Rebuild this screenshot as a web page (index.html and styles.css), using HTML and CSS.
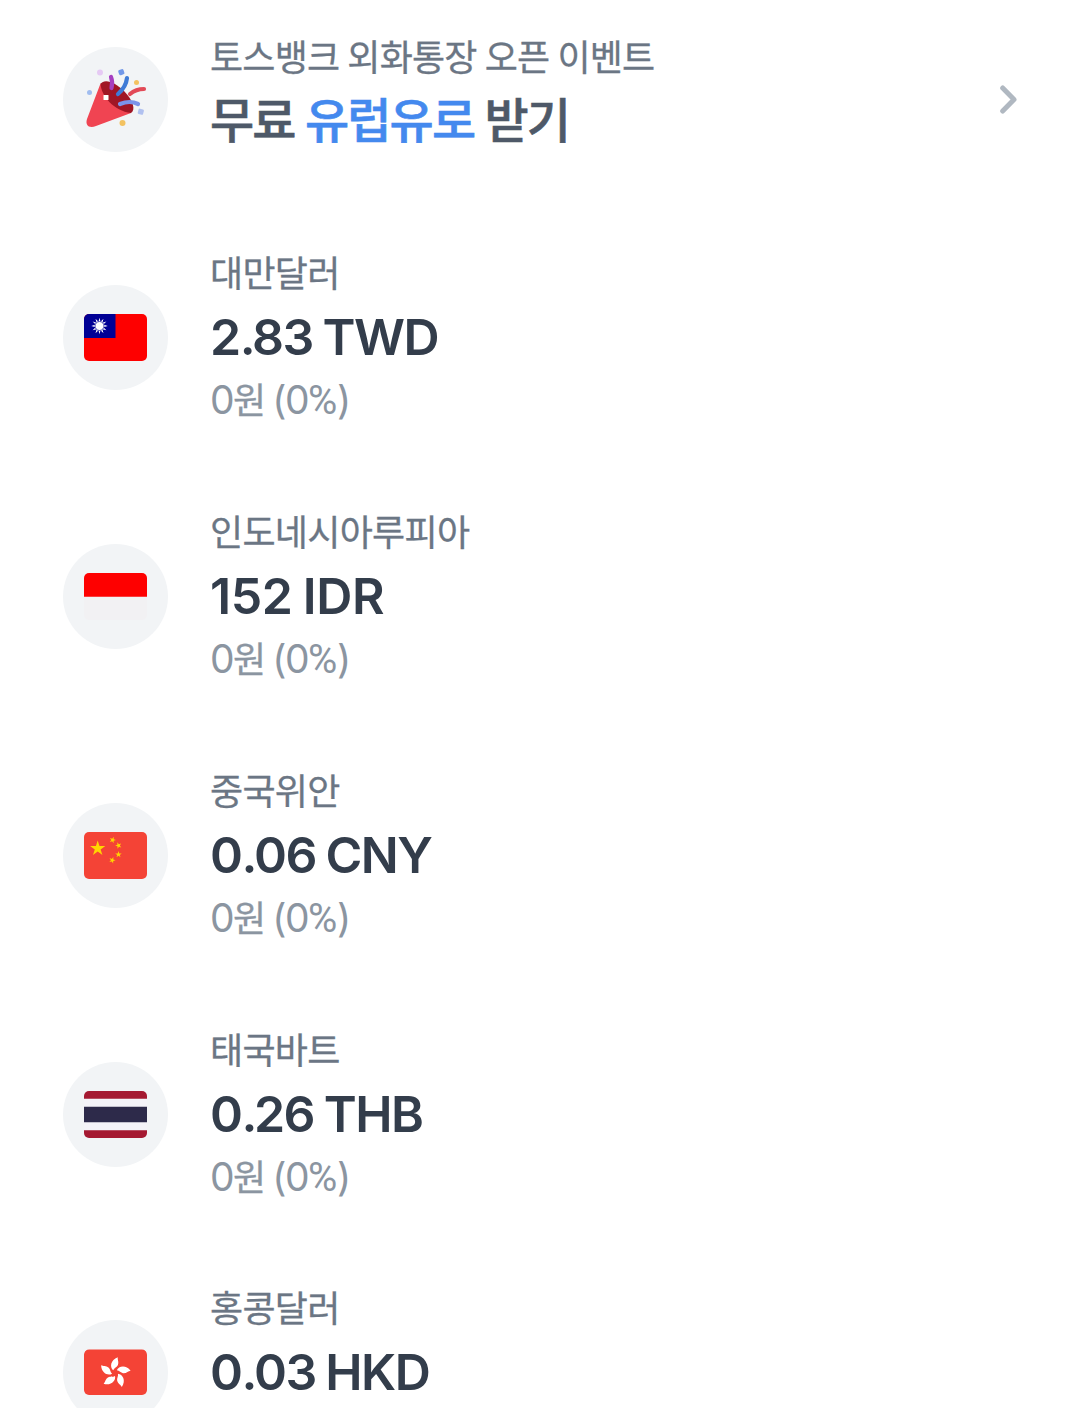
FILE: index.html
```html
<!DOCTYPE html>
<html lang="ko">
<head>
<meta charset="utf-8">
<title>외화통장</title>
<link rel="stylesheet" href="styles.css">
</head>
<body>
<main class="list">
  <a class="row event">
    <span class="badge">
      <svg width="105" height="105" viewBox="0 0 105 105" fill="none" stroke-linecap="round">
        <path d="M37 38C40 31 51 34 61 44C70 53 73 63 68 66L55 66L37 47Z" fill="#a01625"/>
        <path d="M37.500 36.500C38 49 51 64 68 66L33 79C26 82 22 78 24 72Z" fill="#f04452"/>
        <path d="M48 30Q50 35 48.500 41" stroke="#a63fc0" stroke-width="4.200"/>
        <path d="M64 31Q63 40 55 47" stroke="#3f7bd6" stroke-width="4.200"/>
        <path d="M67 47Q73 42 81 42" stroke="#e24a57" stroke-width="4.200"/>
        <path d="M57 57Q67 53 75 57" stroke="#7c93ea" stroke-width="4.200"/>
        <rect x="40.500" y="48" width="5" height="5" rx=".5" fill="#fff"/>
        <circle cx="37" cy="25.500" r="3" fill="#e6caf4"/>
        <rect x="55.500" y="22.500" width="5.500" height="5.500" rx="1.500" fill="#7298e8" transform="rotate(-20 58 25)"/>
        <circle cx="26.500" cy="45.500" r="2.500" fill="#a1bdf0"/>
        <circle cx="73.500" cy="35.500" r="2.500" fill="#f3c261"/>
        <rect x="75" y="62" width="5.500" height="5.500" rx="1.200" fill="#b1c1f0" transform="rotate(15 78 65)"/>
        <circle cx="59.500" cy="76" r="3" fill="#f3c261"/>
      </svg>
    </span>
    <span class="text">
      <span class="name">토스뱅크 외화통장 오픈 이벤트</span>
      <strong class="headline">무료 <em class="accent">유럽유로</em> 받기</strong>
    </span>
    <svg class="chevron" width="17" height="30" viewBox="0 0 17 30" fill="none"><path d="M2.700 3L14 14.500L2.700 26" stroke="#b0b8c1" stroke-width="5" stroke-linecap="round" stroke-linejoin="round"/></svg>
  </a>

  <section class="row">
    <span class="badge">
      <svg class="flag" viewBox="0 0 63 47">
        <path fill="#fe0000" d="M0 0h63v47H0z"/><path fill="#000095" d="M0 0h31.500v24H0z"/>
        <path fill="#fff" d="M15.500 3.700l1 4 3-3-1.100 4 4-1.100-3 3 4.300 1.400-4.300 1.300 3 3-4-1.100 1.100 4-3-3-1 4-1-4-3 3 1.100-4-4 1.100 3-3L7.300 12l4.300-1.400-3-3 4 1.100-1.100-4 3 3z"/>
        <circle cx="15.500" cy="12" r="4.500" fill="#fff" stroke="#000095" stroke-width=".7"/>
      </svg>
    </span>
    <span class="text"><span class="name">대만달러</span><strong class="amount">2<span class="point">.</span>83 TWD</strong><span class="value">0<span class="won">원</span> (0<span class="percent">%</span>)</span></span>
  </section>

  <section class="row">
    <span class="badge">
      <svg class="flag" viewBox="0 0 63 47"><path fill="#f2f1f3" d="M0 0h63v47H0z"/><path fill="#fe0000" d="M0 0h63v23.700H0z"/></svg>
    </span>
    <span class="text"><span class="name">인도네시아루피아</span><strong class="amount whole">152 IDR</strong><span class="value">0<span class="won">원</span> (0<span class="percent">%</span>)</span></span>
  </section>

  <section class="row">
    <span class="badge">
      <svg class="flag" viewBox="0 0 63 47">
        <defs><path id="star" d="M0-1L.2245-.309.951-.309.363.118.588.809 0 .382-.588.809-.363.118-.951-.309-.2245-.309Z"/></defs>
        <path fill="#f44336" d="M0 0h63v47H0z"/>
        <g fill="#ffd600">
          <use href="#star" transform="translate(13.700 16.500) scale(8)"/>
          <use href="#star" transform="translate(28.600 8) rotate(20) scale(3.400)"/>
          <use href="#star" transform="translate(34.500 13.500) rotate(-20) scale(3.400)"/>
          <use href="#star" transform="translate(34.500 22.500) scale(3.400)"/>
          <use href="#star" transform="translate(28.200 28.200) rotate(20) scale(3.400)"/>
        </g>
      </svg>
    </span>
    <span class="text"><span class="name">중국위안</span><strong class="amount">0<span class="point">.</span>06 CNY</strong><span class="value">0<span class="won">원</span> (0<span class="percent">%</span>)</span></span>
  </section>

  <section class="row">
    <span class="badge">
      <svg class="flag" viewBox="0 0 63 47"><path fill="#a51931" d="M0 0h63v47H0z"/><path fill="#f4f3f8" d="M0 7.800h63v31.400H0z"/><path fill="#2d2a4a" d="M0 15.700h63v15.600H0z"/></svg>
    </span>
    <span class="text"><span class="name">태국바트</span><strong class="amount">0<span class="point">.</span>26 THB</strong><span class="value">0<span class="won">원</span> (0<span class="percent">%</span>)</span></span>
  </section>

  <section class="row last">
    <span class="badge">
      <svg class="flag" viewBox="0 0 63 47">
        <defs><path id="petal" d="M-1.800-2.500C-5.500-5.500-4.500-13 2.800-15.500C2.300-13 4.200-11 2.800-7.500C2-5.500-.8-5-1.800-2.500Z"/></defs>
        <rect y=".5" width="63" height="45.500" rx="5" fill="#f44336"/>
        <g fill="#fff" transform="translate(31 23.800)"><use href="#petal"/><use href="#petal" transform="rotate(72)"/><use href="#petal" transform="rotate(144)"/><use href="#petal" transform="rotate(216)"/><use href="#petal" transform="rotate(288)"/></g>
      </svg>
    </span>
    <span class="text"><span class="name">홍콩달러</span><strong class="amount">0<span class="point">.</span>03 HKD</strong></span>
  </section>
</main>
</body>
</html>
```
FILE: styles.css
```css
* { box-sizing: border-box; }
body {
  margin: 0;
  background: #fff;
  font-family: Inter, "Noto Sans CJK KR", sans-serif;
}
.list { display: flex; flex-direction: column; }
.row {
  display: flex;
  align-items: center;
  flex: none;
  gap: 42px;
  height: 259px;
  padding: 0 63px;
}
.row.event { height: 208px; padding-bottom: 9px; }
.row.last {
  height: 164px;
  align-items: flex-start;
  padding-top: 36px;
  overflow: hidden;
}
.row.last .badge { margin-top: 40px; }
.badge {
  display: flex;
  align-items: center;
  justify-content: center;
  flex: none;
  width: 105px;
  height: 105px;
  border-radius: 50%;
  background: #f2f4f6;
}
.flag { width: 63px; height: 47px; border-radius: 5px; overflow: hidden; }
.text {
  display: flex;
  flex-direction: column;
  flex: 1;
  white-space: nowrap;
}
.name {
  padding-bottom: 4px;
  color: #6b7684;
  font: 400 36px/52px "Noto Sans CJK KR", sans-serif;
  letter-spacing: -0.7px;
  word-spacing: -1.2px;
  -webkit-text-stroke: 0.3px currentColor;
}
.event .text { padding-bottom: 20px; }
.event .name { padding-bottom: 0; line-height: 56px; letter-spacing: -0.8px; }
.headline {
  margin-top: -1px;
  padding-bottom: 1px;
  color: #4e5968;
  font: 500 48px/70px "Noto Sans CJK KR", sans-serif;
  letter-spacing: -1.8px;
  word-spacing: -1.5px;
  -webkit-text-stroke: 0.6px currentColor;
}
.accent { color: #4489ee; font-style: normal; }
.amount {
  color: #333d4b;
  font-size: 50px;
  font-weight: 600;
  line-height: 72px;
  letter-spacing: -1.5px;
  word-spacing: -1.5px;
}
.amount.whole { letter-spacing: -0.4px; word-spacing: -2px; }
.point { letter-spacing: -3.5px; }
.value {
  height: 57px;
  color: #8b95a1;
  font-size: 39px;
  line-height: 54px;
  letter-spacing: -1.5px;
  word-spacing: -2px;
}
.won { font: 400 36px/1 "Noto Sans CJK KR", sans-serif; -webkit-text-stroke: 0.3px currentColor; }
.percent { font: 400 40px/1 Roboto, sans-serif; letter-spacing: -0.3px; }
.chevron { flex: none; }
```
